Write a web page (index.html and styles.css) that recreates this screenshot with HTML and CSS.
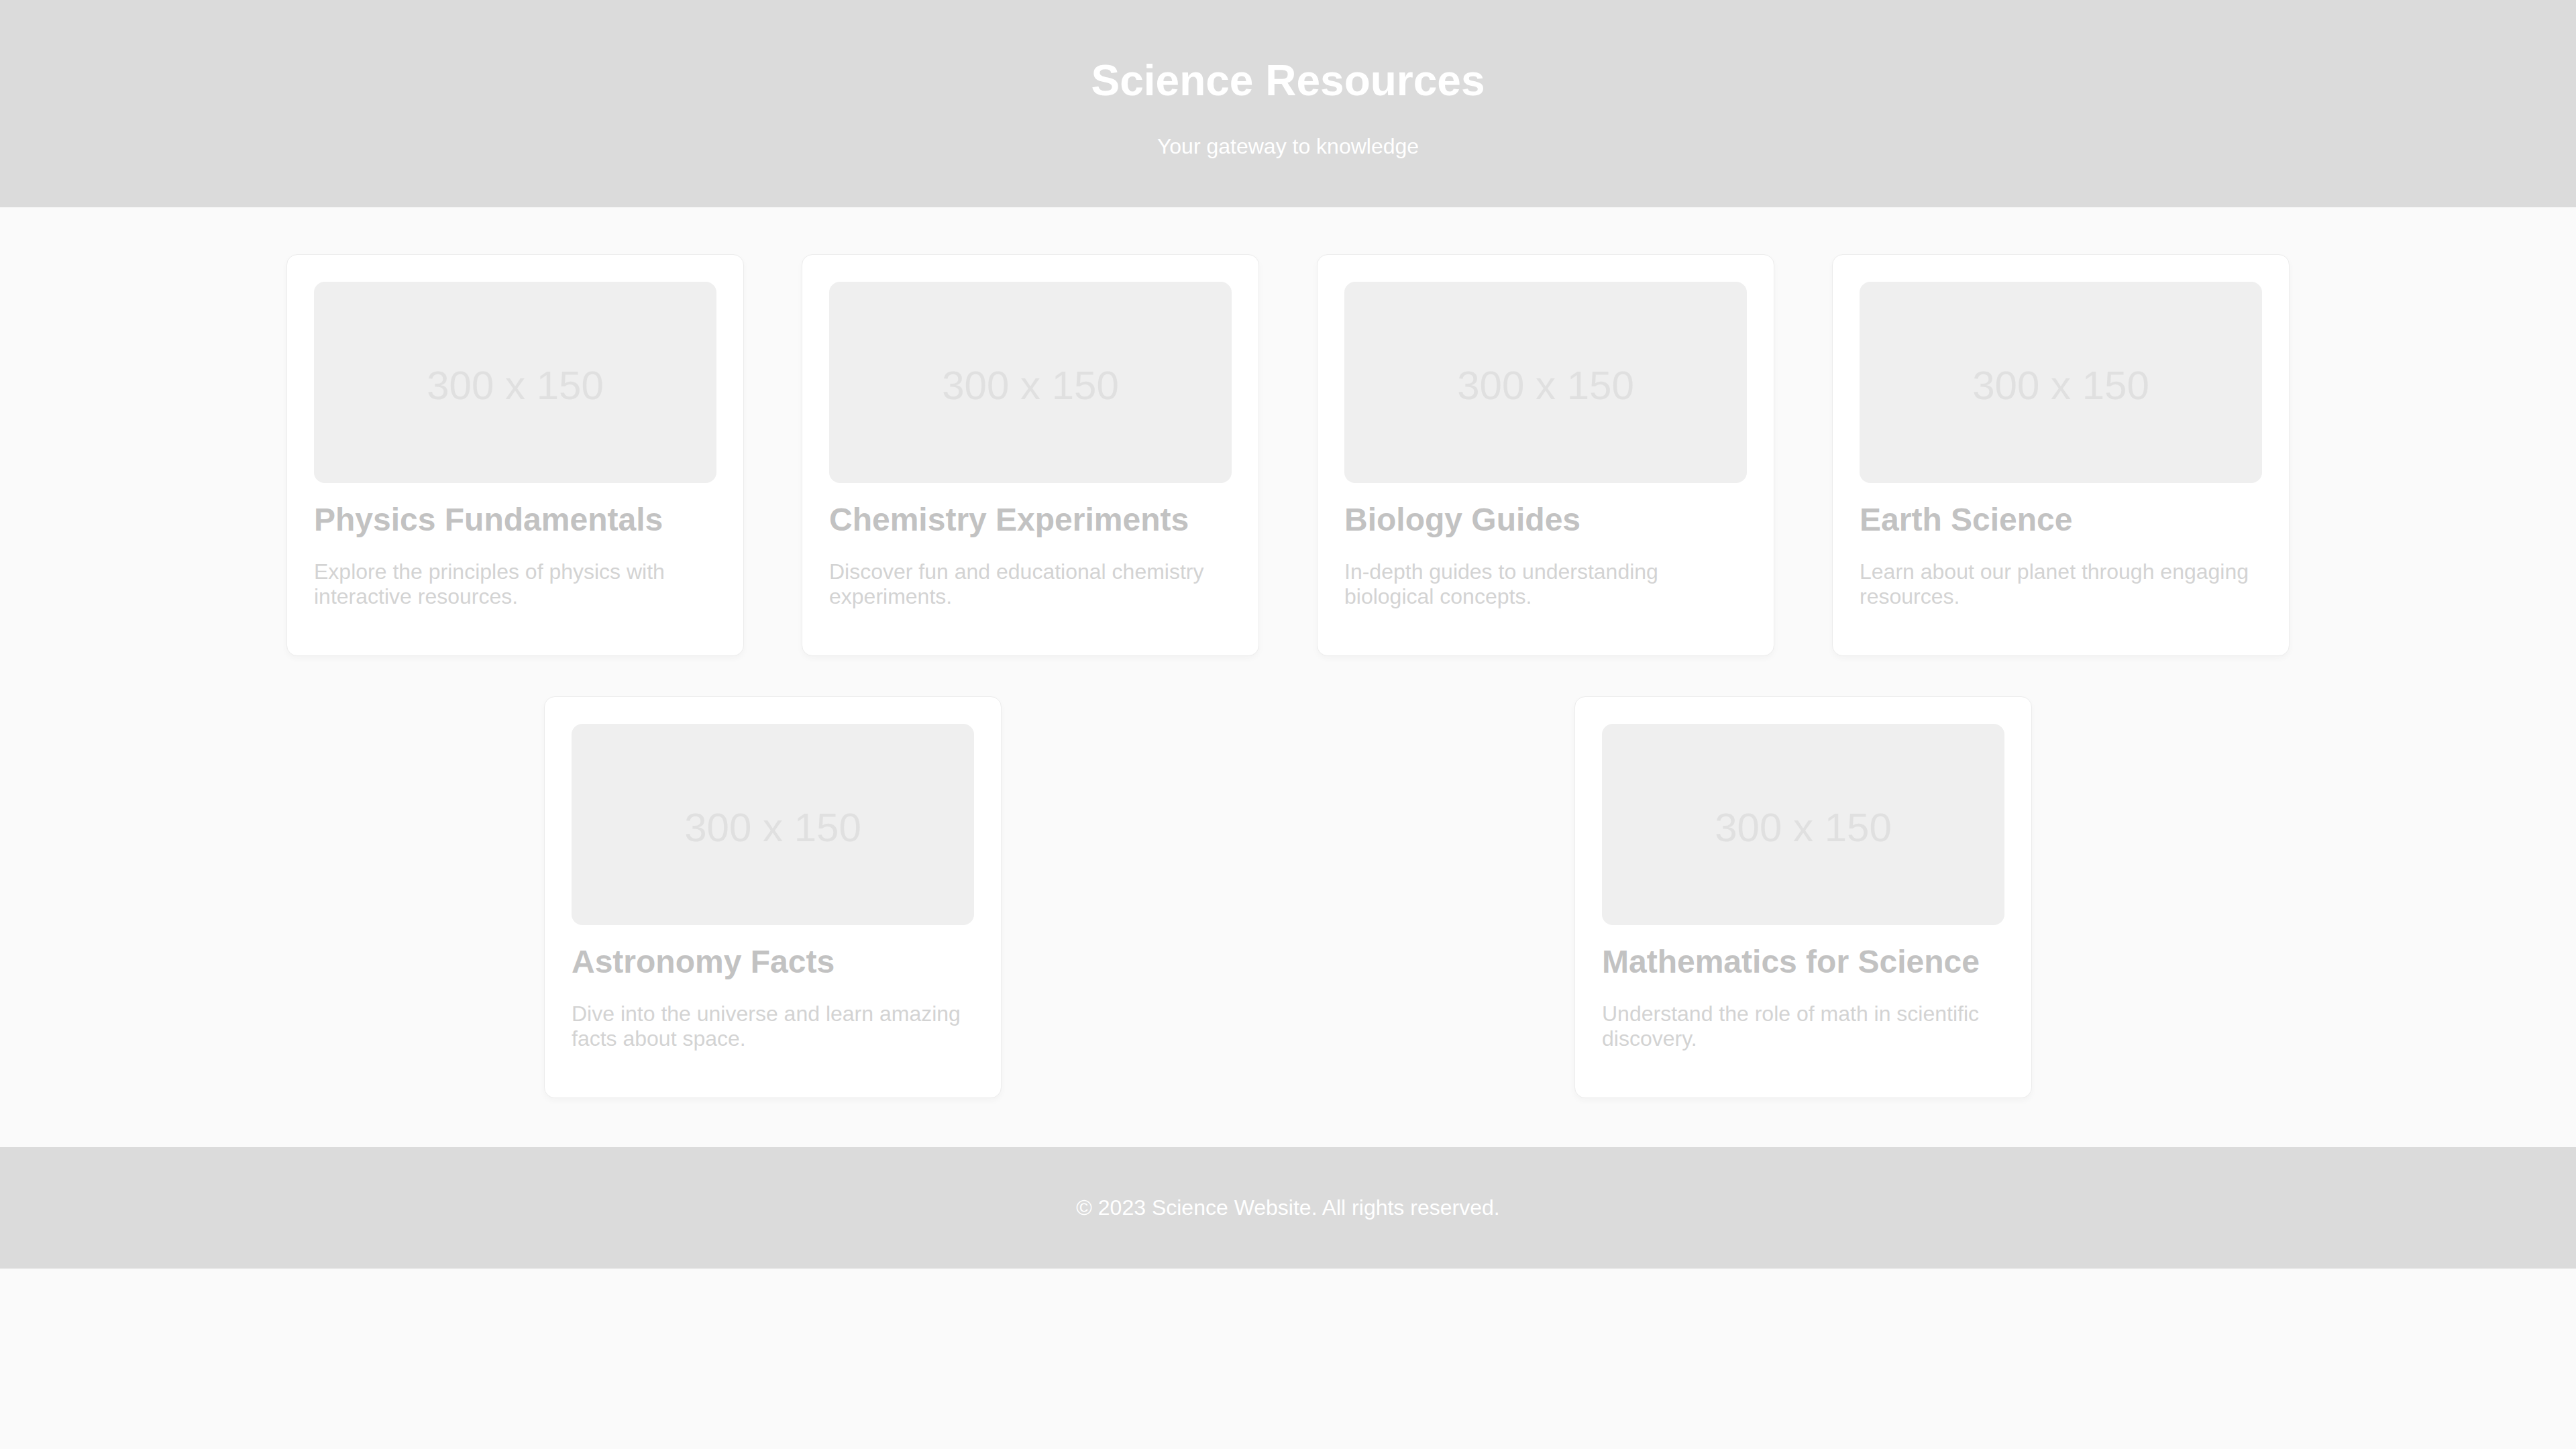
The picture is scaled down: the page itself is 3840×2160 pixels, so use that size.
FILE: index.html
```html
<!DOCTYPE html>
<html lang="en">
<head>
<meta charset="utf-8">
<title>Science Resources</title>
<link rel="stylesheet" href="styles.css">
</head>
<body>
<header class="site-header">
  <h1 class="site-title">Science Resources</h1>
  <p class="site-tagline">Your gateway to knowledge</p>
</header>
<main class="resources">
  <article class="card">
    <div class="thumb">300 x 150</div>
    <h2 class="card-title">Physics Fundamentals</h2>
    <p class="card-text">Explore the principles of physics with interactive resources.</p>
  </article>
  <article class="card">
    <div class="thumb">300 x 150</div>
    <h2 class="card-title">Chemistry Experiments</h2>
    <p class="card-text">Discover fun and educational chemistry experiments.</p>
  </article>
  <article class="card">
    <div class="thumb">300 x 150</div>
    <h2 class="card-title">Biology Guides</h2>
    <p class="card-text">In-depth guides to understanding biological concepts.</p>
  </article>
  <article class="card">
    <div class="thumb">300 x 150</div>
    <h2 class="card-title">Earth Science</h2>
    <p class="card-text">Learn about our planet through engaging resources.</p>
  </article>
  <article class="card">
    <div class="thumb">300 x 150</div>
    <h2 class="card-title">Astronomy Facts</h2>
    <p class="card-text">Dive into the universe and learn amazing facts about space.</p>
  </article>
  <article class="card">
    <div class="thumb">300 x 150</div>
    <h2 class="card-title">Mathematics for Science</h2>
    <p class="card-text">Understand the role of math in scientific discovery.</p>
  </article>
</main>
<footer class="site-footer">
  <p class="footer-text">&copy; 2023 Science Website. All rights reserved.</p>
</footer>
</body>
</html>
```
FILE: styles.css
```css
html, body {
  margin: 0;
  padding: 0;
}
body {
  background: #fafafa;
  font-family: "Liberation Sans", Arial, sans-serif;
  font-size: 32px;
  color: #d4d4d4;
}
.site-header {
  background: #dbdbdb;
  color: #ffffff;
  text-align: center;
  padding: 40px 0;
}
.site-title {
  font-size: 64px;
  font-weight: bold;
  margin: 42.88px 0;
}
.site-tagline {
  font-size: 32px;
  margin: 32px 0;
}
.resources {
  width: 80%;
  margin: 0 auto;
  padding: 40px 0 43px;
  display: flex;
  flex-wrap: wrap;
  justify-content: space-around;
}
.card {
  width: 600px;
  padding: 40px 40px 37px;
  margin: 30px;
  background: #ffffff;
  border: 1px solid #ececec;
  border-radius: 16px;
  box-shadow: 0 4px 10px rgba(0, 0, 0, 0.03);
}
.thumb {
  width: 600px;
  height: 290px;
  padding-top: 10px;
  background: #efefef;
  border-radius: 16px;
  display: flex;
  align-items: center;
  justify-content: center;
  font-size: 60px;
  color: #e0e0e0;
}
.card-title {
  font-size: 48px;
  font-weight: bold;
  color: #c2c2c2;
  margin: 27px 0 20px;
}
.card-text {
  font-size: 32px;
  color: #d3d3d3;
  margin: 32px 0;
}
.site-footer {
  background: #dbdbdb;
  color: #ffffff;
  text-align: center;
  padding: 40px 0;
}
.footer-text {
  font-size: 32px;
  margin: 32px 0;
}
```
